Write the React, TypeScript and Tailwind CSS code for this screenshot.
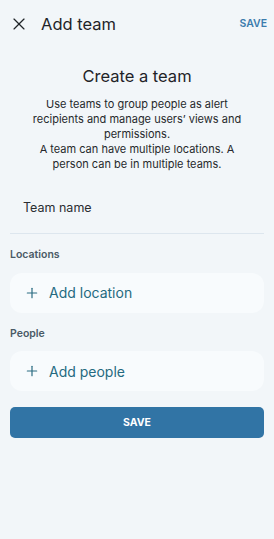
import { Plus, X } from "lucide-react";

function AddRow({ label }: { label: string }) {
  return (
    <button
      type="button"
      className="flex h-[40px] w-full items-center gap-[9px] rounded-[12px] bg-[#f8fbfd] pl-[14px] text-left text-[14px] text-[#256a80]"
    >
      <Plus size={16} strokeWidth={1.8} className="text-[#2b6c82]" aria-hidden />
      {label}
    </button>
  );
}

function SectionLabel({ children }: { children: string }) {
  return (
    <div className="mb-[10px] text-[10.5px] font-semibold text-[#4a5a66]">{children}</div>
  );
}

export default function App() {
  return (
    <div
      className="min-h-[539px] w-[274px] bg-[#f2f6f9] text-[#1f2328]"
      style={{ fontFamily: "Inter, 'Noto Sans', sans-serif" }}
    >
      <header className="flex h-[48px] items-center pl-[9px] pr-[7px]">
        <X size={20} strokeWidth={1.4} className="text-[#202428]" aria-hidden />
        <h1 className="ml-[12px] text-[16.5px] text-[#1f2328]">Add team</h1>
        <button type="button" className="ml-auto text-[10.5px] font-semibold text-[#3b7cad]">
          SAVE
        </button>
      </header>

      <section className="px-[32px] pt-[17px] text-center">
        <h2 className="text-[16.5px] leading-[22px] text-[#1f2328]">Create a team</h2>
        <p className="mt-[10px] text-[11px] leading-[15px] text-[#26292c]">
          Use teams to group people as alert recipients and manage users’ views and
          permissions.
          <br />
          A team can have multiple locations. A person can be in multiple teams.
        </p>
      </section>

      <div className="px-[10px]">
        <div className="mt-[27px] border-b border-[#dde6ee] pb-[15px] pl-[13px] text-[12.5px] text-[#2a2e32]">
          Team name
        </div>

        <div className="mt-[13px]">
          <SectionLabel>Locations</SectionLabel>
          <AddRow label="Add location" />
        </div>

        <div className="mt-[13px]">
          <SectionLabel>People</SectionLabel>
          <AddRow label="Add people" />
        </div>

        <button
          type="button"
          className="mt-[16px] h-[31px] w-full rounded-[5px] bg-[#3174a5] text-[10.5px] font-bold text-white"
        >
          SAVE
        </button>
      </div>
    </div>
  );
}
